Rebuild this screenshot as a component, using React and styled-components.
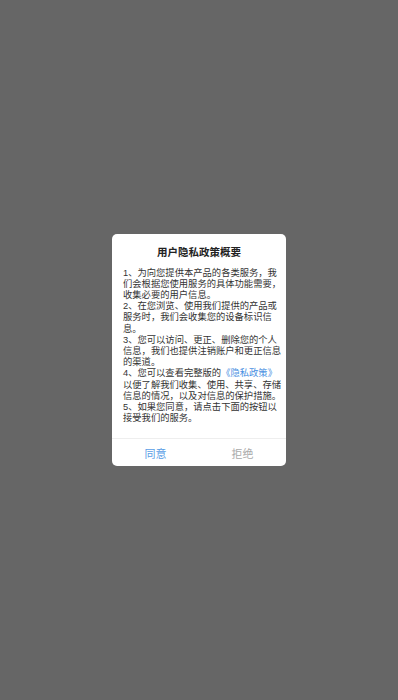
import styled, { createGlobalStyle } from "styled-components";

const GlobalStyle = createGlobalStyle`
  html, body {
    margin: 0;
    padding: 0;
    background: #666666;
  }
`;

const Screen = styled.div`
  min-height: 100vh;
  display: flex;
  align-items: center;
  justify-content: center;
  background: #666666;
  font-family: "Liberation Sans", "Noto Sans CJK SC", sans-serif;
`;

const Dialog = styled.div`
  width: 174px;
  background: #ffffff;
  border-radius: 5px;
  overflow: hidden;
  display: flex;
  flex-direction: column;
`;

const Title = styled.h3`
  margin: 0;
  padding: 11px 0 0;
  text-align: center;
  font-size: 10.5px;
  line-height: 14px;
  font-weight: 700;
  color: #222;
`;

const Body = styled.div`
  padding: 9px 8px 14px 11px;
  font-size: 9.3px;
  line-height: 11.2px;
  color: #333;
`;

const Para = styled.p`
  margin: 0;
  white-space: nowrap;
`;

const Link = styled.span`
  color: #4a90e2;
`;

const Footer = styled.div`
  display: flex;
  border-top: 1px solid #eeeeee;
  height: 27px;
`;

const FooterButton = styled.button`
  flex: 1;
  border: none;
  background: transparent;
  font-family: inherit;
  font-size: 11px;
  padding: 0;
  color: ${(p) => (p.$primary ? "#5a9ee6" : "#aaaaaa")};
  cursor: pointer;
`;

const paragraphs = [
  ["1、为向您提供本产品的各类服务，我", "们会根据您使用服务的具体功能需要，", "收集必要的用户信息。"],
  ["2、在您浏览、使用我们提供的产品或", "服务时，我们会收集您的设备标识信", "息。"],
  ["3、您可以访问、更正、删除您的个人", "信息，我们也提供注销账户和更正信息", "的渠道。"],
];

const App = () => {
  return (
    <Screen>
      <GlobalStyle />
      <Dialog>
        <Title>用户隐私政策概要</Title>
        <Body>
          {paragraphs.map((lines, i) => (
            <Para key={i}>
              {lines.map((l, j) => (
                <span key={j}>
                  {l}
                  {j < lines.length - 1 && <br />}
                </span>
              ))}
            </Para>
          ))}
          <Para>
            4、您可以查看完整版的<Link>《隐私政策》</Link>
            <br />
            以便了解我们收集、使用、共享、存储
            <br />
            信息的情况，以及对信息的保护措施。
          </Para>
          <Para>
            5、如果您同意，请点击下面的按钮以
            <br />
            接受我们的服务。
          </Para>
        </Body>
        <Footer>
          <FooterButton $primary>同意</FooterButton>
          <FooterButton>拒绝</FooterButton>
        </Footer>
      </Dialog>
    </Screen>
  );
};

export default App;
